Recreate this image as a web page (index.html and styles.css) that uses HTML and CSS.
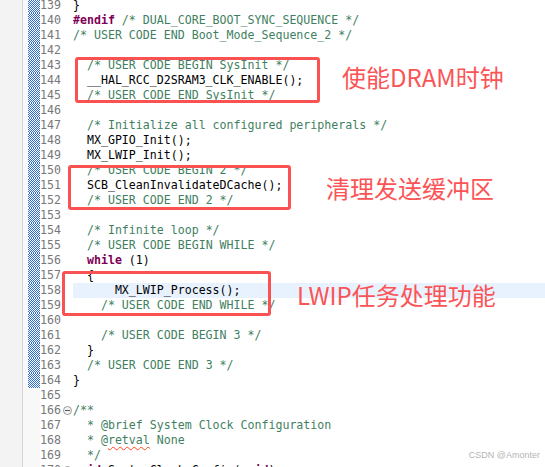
FILE: index.html
```html
<!DOCTYPE html>
<html lang="zh">
<head>
<meta charset="utf-8">
<title>Editor</title>
<link rel="stylesheet" href="styles.css">
</head>
<body>
<div class="page">
  <div class="editor">
    <div class="row mk"><span class="ruler"></span><span class="ov"></span><span class="num">139</span><span class="fold"></span><span class="code">}</span></div>
    <div class="row mk"><span class="ruler"></span><span class="ov"></span><span class="num">140</span><span class="fold"></span><span class="code"><b class="kw">#endif</b><i class="cm"> /* DUAL_CORE_BOOT_SYNC_SEQUENCE */</i></span></div>
    <div class="row mk"><span class="ruler"></span><span class="ov"></span><span class="num">141</span><span class="fold"></span><span class="code"><i class="cm">/* USER CODE END Boot_Mode_Sequence_2 */</i></span></div>
    <div class="row mk"><span class="ruler"></span><span class="ov"></span><span class="num">142</span><span class="fold"></span><span class="code"></span></div>
    <div class="row mk"><span class="ruler"></span><span class="ov"></span><span class="num">143</span><span class="fold"></span><span class="code">  <i class="cm">/* USER CODE BEGIN SysInit */</i></span></div>
    <div class="row mk"><span class="ruler"></span><span class="ov"></span><span class="num">144</span><span class="fold"></span><span class="code">  __HAL_RCC_D2SRAM3_CLK_ENABLE();</span></div>
    <div class="row mk"><span class="ruler"></span><span class="ov"></span><span class="num">145</span><span class="fold"></span><span class="code">  <i class="cm">/* USER CODE END SysInit */</i></span></div>
    <div class="row mk"><span class="ruler"></span><span class="ov"></span><span class="num">146</span><span class="fold"></span><span class="code"></span></div>
    <div class="row mk"><span class="ruler"></span><span class="ov"></span><span class="num">147</span><span class="fold"></span><span class="code">  <i class="cm">/* Initialize all configured peripherals */</i></span></div>
    <div class="row mk"><span class="ruler"></span><span class="ov"></span><span class="num">148</span><span class="fold"></span><span class="code">  MX_GPIO_Init();</span></div>
    <div class="row mk"><span class="ruler"></span><span class="ov"></span><span class="num">149</span><span class="fold"></span><span class="code">  MX_LWIP_Init();</span></div>
    <div class="row mk"><span class="ruler"></span><span class="ov"></span><span class="num">150</span><span class="fold"></span><span class="code">  <i class="cm">/* USER CODE BEGIN 2 */</i></span></div>
    <div class="row mk"><span class="ruler"></span><span class="ov"></span><span class="num">151</span><span class="fold"></span><span class="code">  SCB_CleanInvalidateDCache();</span></div>
    <div class="row mk"><span class="ruler"></span><span class="ov"></span><span class="num">152</span><span class="fold"></span><span class="code">  <i class="cm">/* USER CODE END 2 */</i></span></div>
    <div class="row mk"><span class="ruler"></span><span class="ov"></span><span class="num">153</span><span class="fold"></span><span class="code"></span></div>
    <div class="row mk"><span class="ruler"></span><span class="ov"></span><span class="num">154</span><span class="fold"></span><span class="code">  <i class="cm">/* Infinite loop */</i></span></div>
    <div class="row mk"><span class="ruler"></span><span class="ov"></span><span class="num">155</span><span class="fold"></span><span class="code">  <i class="cm">/* USER CODE BEGIN WHILE */</i></span></div>
    <div class="row mk"><span class="ruler"></span><span class="ov"></span><span class="num">156</span><span class="fold"></span><span class="code">  <b class="kw">while</b> (1)</span></div>
    <div class="row mk"><span class="ruler"></span><span class="ov"></span><span class="num">157</span><span class="fold"></span><span class="code">  {</span></div>
    <div class="row mk"><span class="ruler"></span><span class="ov"></span><span class="num">158</span><span class="fold"></span><span class="code current">      MX_LWIP_Process();</span></div>
    <div class="row mk"><span class="ruler"></span><span class="ov"></span><span class="num">159</span><span class="fold"></span><span class="code">    <i class="cm">/* USER CODE END WHILE */</i></span></div>
    <div class="row mk"><span class="ruler"></span><span class="ov"></span><span class="num">160</span><span class="fold"></span><span class="code"></span></div>
    <div class="row mk"><span class="ruler"></span><span class="ov"></span><span class="num">161</span><span class="fold"></span><span class="code">    <i class="cm">/* USER CODE BEGIN 3 */</i></span></div>
    <div class="row mk"><span class="ruler"></span><span class="ov"></span><span class="num">162</span><span class="fold"></span><span class="code">  }</span></div>
    <div class="row mk"><span class="ruler"></span><span class="ov"></span><span class="num">163</span><span class="fold"></span><span class="code">  <i class="cm">/* USER CODE END 3 */</i></span></div>
    <div class="row mk"><span class="ruler"></span><span class="ov"></span><span class="num">164</span><span class="fold"></span><span class="code">}</span></div>
    <div class="row"><span class="ruler"></span><span class="ov"></span><span class="num">165</span><span class="fold"></span><span class="code"></span></div>
    <div class="row"><span class="ruler"></span><span class="ov"></span><span class="num">166</span><span class="fold"><span class="fold-icon"></span></span><span class="code"><i class="cm">/**</i></span></div>
    <div class="row"><span class="ruler"></span><span class="ov"></span><span class="num">167</span><span class="fold"></span><span class="code"><i class="cm">  * @brief System Clock Configuration</i></span></div>
    <div class="row"><span class="ruler"></span><span class="ov"></span><span class="num">168</span><span class="fold"></span><span class="code"><i class="cm">  * @<span class="spell">retval</span> None</i></span></div>
    <div class="row"><span class="ruler"></span><span class="ov"></span><span class="num">169</span><span class="fold"></span><span class="code"><i class="cm">  */</i></span></div>
    <div class="row"><span class="ruler"></span><span class="ov"></span><span class="num">170</span><span class="fold"><span class="fold-icon"></span></span><span class="code"><b class="kw">void</b> SystemClock_Config(<b class="kw">void</b>)</span></div>
  </div>

  <div class="note-box box1"></div>
  <div class="note-box box2"></div>
  <div class="note-box box3"></div>
  <div class="note-label label1">使能DRAM时钟</div>
  <div class="note-label label2">清理发送缓冲区</div>
  <div class="note-label label3">LWIP任务处理功能</div>
  <div class="watermark">CSDN @Amonter</div>
</div>
</body>
</html>
```
FILE: styles.css
```css
html, body {
  margin: 0;
  padding: 0;
  background: #ffffff;
  overflow: hidden;
}

.page {
  position: relative;
  width: 545px;
  height: 467px;
  overflow: hidden;
}

.editor {
  margin-top: -2px;
  display: flex;
  flex-direction: column;
}

.row {
  display: grid;
  grid-template-columns: 22px 1px 5px 12px 21px 12px 1fr;
  height: 15px;
  font-family: "DejaVu Sans Mono", "Liberation Mono", monospace;
  font-size: 11.6px;
  line-height: 15px;
}

.row::before {
  content: "";
  background: #f3f3f3;
  grid-column: 1;
}

.ruler {
  grid-column: 2;
  background: #d4d4d4;
}

.row::after {
  content: "";
  grid-column: 3;
  grid-row: 1;
  background: #f8f8f8;
}

.ov {
  grid-column: 4;
  background: #f8f8f8;
}

.mk .ov {
  background: repeating-conic-gradient(#2f6bd6 0 25%, #ffffff 0 50%) 0 0 / 2px 2px;
}

.num {
  grid-column: 5;
  color: #787878;
  text-align: right;
  background: #ffffff;
}

.fold {
  grid-column: 6;
  position: relative;
  background: #ffffff;
}

.fold-icon {
  position: absolute;
  left: 2px;
  top: 3px;
  width: 7px;
  height: 7px;
  border: 1px solid #9a9a9a;
  border-radius: 50%;
  box-sizing: border-box;
  width: 9px;
  height: 9px;
  background: #f4f4f4;
}

.fold-icon::after {
  content: "";
  position: absolute;
  left: 1px;
  right: 1px;
  top: 3px;
  height: 1px;
  background: #555555;
}

.code {
  grid-column: 7;
  white-space: pre;
  color: #000000;
}

.code.current {
  background: #e8f2fe;
}

.kw {
  color: #7f0055;
  font-weight: bold;
}

.cm {
  color: #3f7f5f;
  font-style: normal;
}

.spell {
  text-decoration: underline wavy #ff4a1a;
  text-decoration-thickness: 1px;
  text-underline-offset: 2px;
}

.note-box {
  position: absolute;
  border: 3px solid #fa5252;
  border-radius: 3px;
  box-sizing: border-box;
}

.box1 { left: 75px; top: 57px; width: 245px; height: 46px; }
.box2 { left: 68px; top: 165px; width: 223px; height: 45px; }
.box3 { left: 62px; top: 271px; width: 209px; height: 45px; }

.note-label {
  position: absolute;
  font-family: "Noto Sans CJK SC", "Noto Sans", sans-serif;
  font-size: 24px;
  line-height: 30px;
  color: #fb5456;
  white-space: nowrap;
}

.label1 { left: 342px; top: 62px; }
.label2 { left: 326px; top: 173px; }
.label3 { left: 297px; top: 280px; }

.watermark {
  position: absolute;
  right: 5px;
  top: 450px;
  font-family: "Liberation Sans", Arial, sans-serif;
  font-size: 9px;
  line-height: 11px;
  color: #b4b4b4;
}
```
